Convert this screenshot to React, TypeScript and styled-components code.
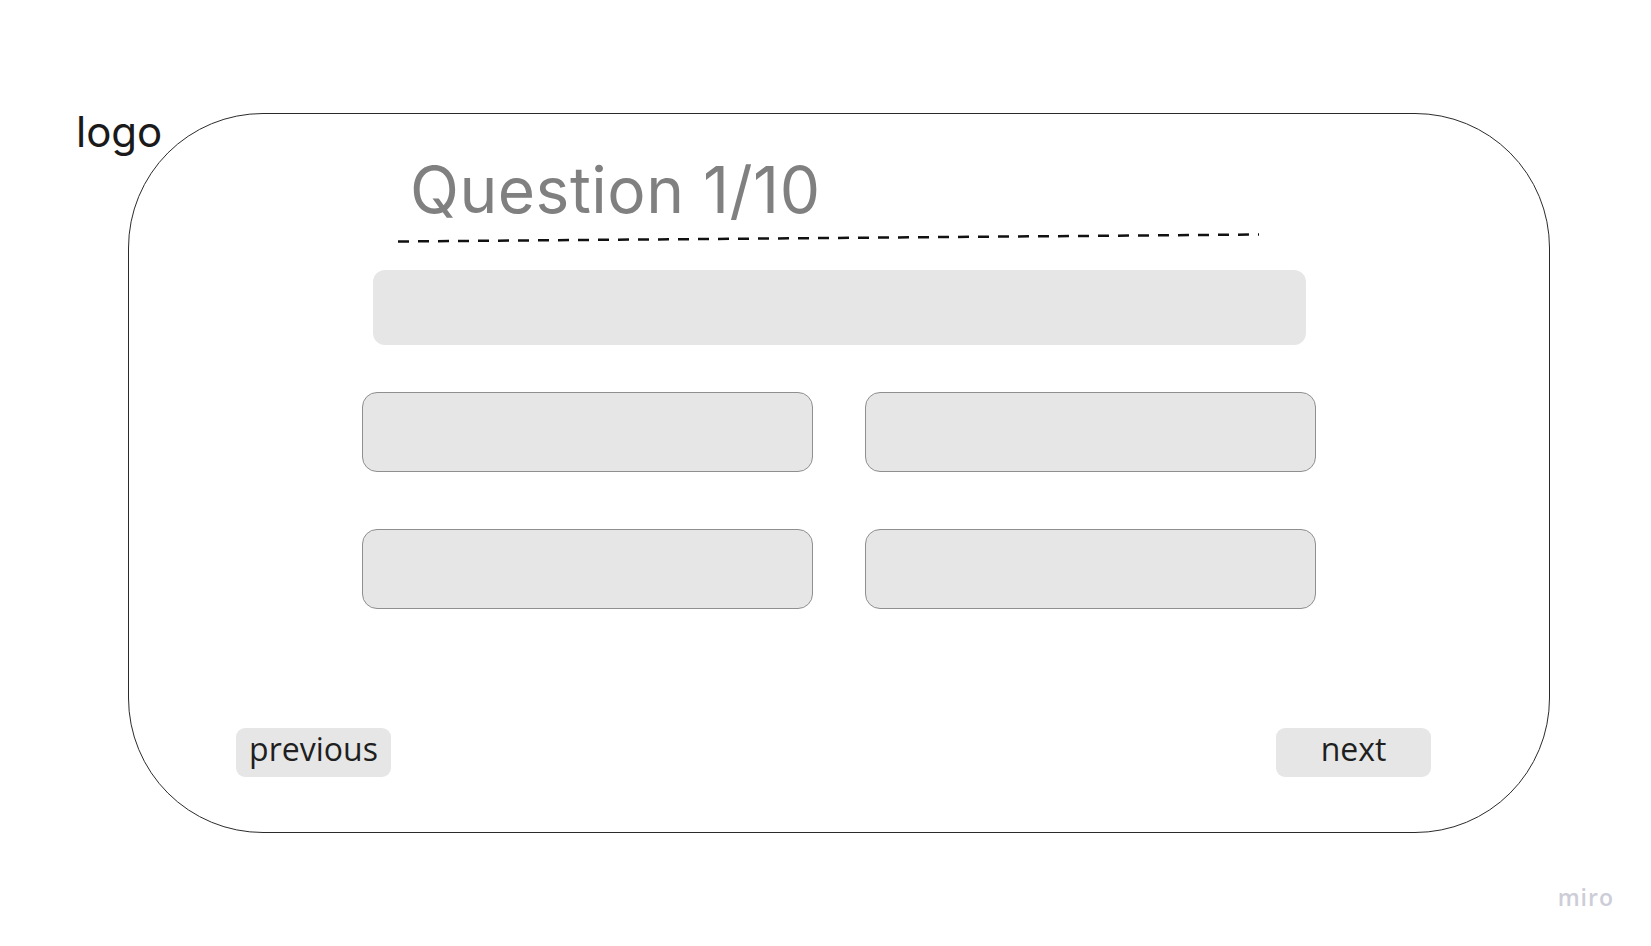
import * as React from 'react';
import styled, { createGlobalStyle } from 'styled-components';

const GlobalStyle = createGlobalStyle`
  html, body {
    margin: 0;
    padding: 0;
    background: #ffffff;
  }
  * {
    box-sizing: border-box;
  }
`;

const Page = styled.div`
  position: relative;
  width: 1651px;
  height: 946px;
  padding: 113px 0 0 128px;
  background: #ffffff;
  overflow: hidden;
`;

const Logo = styled.div`
  position: absolute;
  top: 111px;
  left: 76px;
  font-family: Inter, 'Liberation Sans', sans-serif;
  font-size: 42px;
  line-height: 1;
  color: #1a1a1a;
  z-index: 2;
`;

const Card = styled.div`
  width: 1422px;
  height: 720px;
  border: 1px solid #2b2b2b;
  border-radius: 135px;
  display: flex;
  flex-direction: column;
  padding: 44px 0 55px;
`;

const Title = styled.h1`
  margin: 0 0 0 281px;
  font-family: Inter, 'Liberation Sans', sans-serif;
  font-weight: 400;
  font-size: 64px;
  line-height: 64px;
  color: #808080;
  letter-spacing: 0.5px;
`;

const Divider = styled.svg`
  display: block;
  margin: 11px 0 0 269px;
`;

const QuestionBox = styled.div`
  align-self: center;
  width: 933px;
  height: 75px;
  margin-top: 27px;
  border-radius: 12px;
  background: #e6e6e6;
`;

const AnswerGrid = styled.div`
  align-self: center;
  margin-top: 47px;
  display: grid;
  grid-template-columns: 451px 451px;
  grid-auto-rows: 80px;
  column-gap: 52px;
  row-gap: 57px;
`;

const Answer = styled.div`
  border: 1px solid #8f8f8f;
  border-radius: 15px;
  background: #e6e6e6;
`;

const Nav = styled.div`
  margin-top: auto;
  display: flex;
  justify-content: space-between;
  padding: 0 118px 0 107px;
`;

const NavButton = styled.button`
  width: 155px;
  height: 49px;
  border: none;
  border-radius: 9px;
  background: #e6e6e6;
  font-family: 'Open Sans', 'Liberation Sans', sans-serif;
  font-size: 32px;
  line-height: 1;
  color: #1f1f1f;
  padding: 0 0 8px;
  display: flex;
  align-items: center;
  justify-content: center;
  cursor: pointer;
`;

const Watermark = styled.div`
  position: absolute;
  right: 37px;
  bottom: 33px;
  font-family: 'Open Sans', 'Liberation Sans', sans-serif;
  font-size: 23px;
  font-weight: 600;
  letter-spacing: 1px;
  color: #cdcdd8;
`;

export default function App() {
  return (
    <>
      <GlobalStyle />
      <Page>
        <Logo>logo</Logo>
        <Card>
          <Title>Question 1/10</Title>
          <Divider width="862" height="10" viewBox="0 0 862 10">
            <line
              x1="0"
              y1="8.5"
              x2="861"
              y2="1.5"
              stroke="#111"
              strokeWidth="2.5"
              strokeDasharray="11 9"
            />
          </Divider>
          <QuestionBox />
          <AnswerGrid>
            <Answer />
            <Answer />
            <Answer />
            <Answer />
          </AnswerGrid>
          <Nav>
            <NavButton>previous</NavButton>
            <NavButton>next</NavButton>
          </Nav>
        </Card>
        <Watermark>miro</Watermark>
      </Page>
    </>
  );
}
